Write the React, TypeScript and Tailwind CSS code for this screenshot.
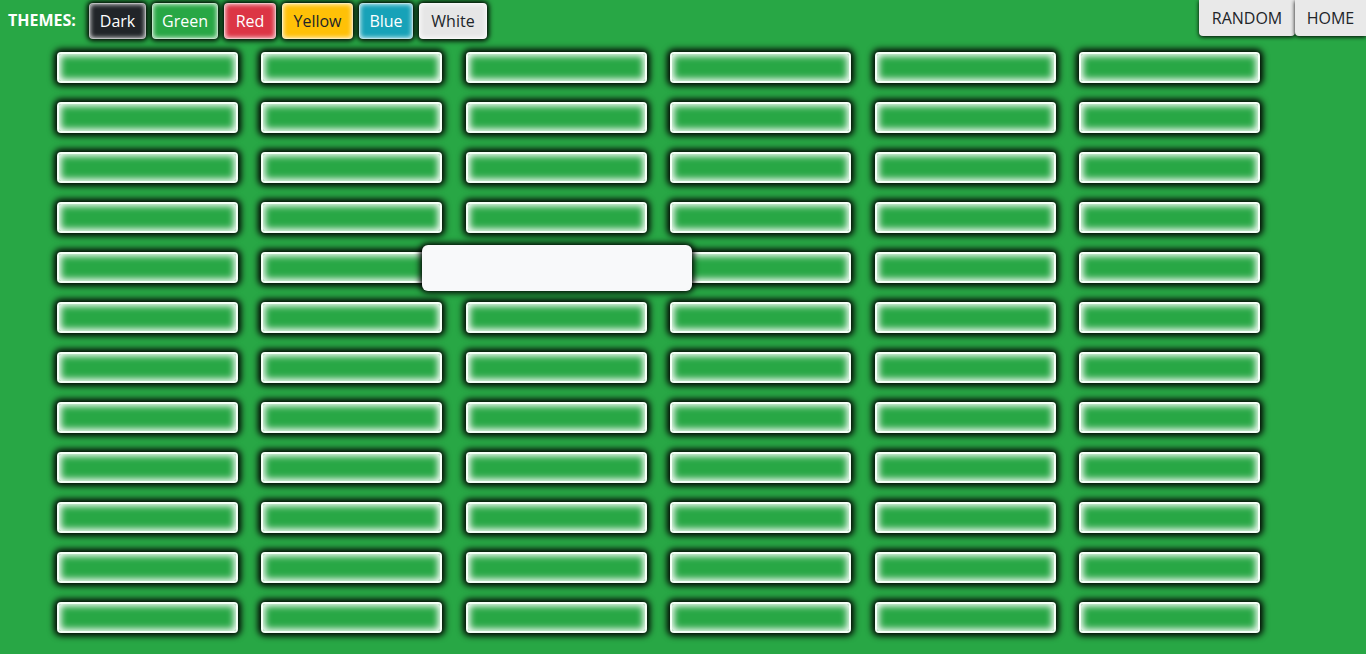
import React from 'react'

const themes = [
  { name: 'Dark', cls: 'bg-[#212529] text-white w-[57px]' },
  { name: 'Green', cls: 'bg-[#28a745] text-white w-[66px]' },
  { name: 'Red', cls: 'bg-[#dc3545] text-white w-[52px]' },
  { name: 'Yellow', cls: 'bg-[#ffc107] text-[#212529] w-[71px]' },
  { name: 'Blue', cls: 'bg-[#17a2b8] text-white w-[54px]' },
  { name: 'White', cls: 'bg-[#e6e6e6] text-[#212529] w-[68px]' },
]

const rows = Array.from({ length: 12 })
const cols = Array.from({ length: 6 })

export default function App() {
  return (
    <div
      className="relative h-[654px] w-[1366px] overflow-hidden bg-[#28a745]"
      style={{ fontFamily: '"Open Sans", "Noto Sans", sans-serif' }}
    >
      <div className="flex items-start justify-between">
        <div className="flex items-center pt-[3px]">
          <span className="ml-[8px] w-[81px] pb-[2px] text-[16px] font-bold text-white">THEMES:</span>
          <div className="flex gap-[6px]">
            {themes.map((t) => (
              <button
                key={t.name}
                className={`h-[36px] rounded-[4px] border border-white/70 text-[16px] shadow-[0_0_5px_2px_#000,inset_0_0_5px_#fff] ${t.cls}`}
              >
                {t.name}
              </button>
            ))}
          </div>
        </div>
        <div className="flex">
          <button className="h-[36px] w-[96px] rounded-b-[4px] bg-[#e9e9e9] text-[16px] text-[#212529] shadow-[0_1px_4px_#000]">
            RANDOM
          </button>
          <button className="h-[36px] w-[71px] rounded-bl-[4px] bg-[#e9e9e9] text-[16px] text-[#212529] shadow-[0_1px_4px_#000]">
            HOME
          </button>
        </div>
      </div>

      <div className="ml-[57px] mt-[13px] flex flex-col gap-[19px]">
        {rows.map((_, r) => (
          <div key={r} className="flex gap-[23.4px]">
            {cols.map((_, c) => (
              <div
                key={c}
                className="h-[31px] w-[181px] rounded-[4px] border-2 border-[#f4fff6] bg-[#28a745] shadow-[0_0_6px_3px_#000,inset_0_0_7px_2px_#fff]"
              />
            ))}
          </div>
        ))}
      </div>

      <div className="absolute left-[422px] top-[245px] h-[46px] w-[270px] rounded-[6px] bg-[#f8f9fa] shadow-[0_0_6px_2px_#000]" />
    </div>
  )
}
